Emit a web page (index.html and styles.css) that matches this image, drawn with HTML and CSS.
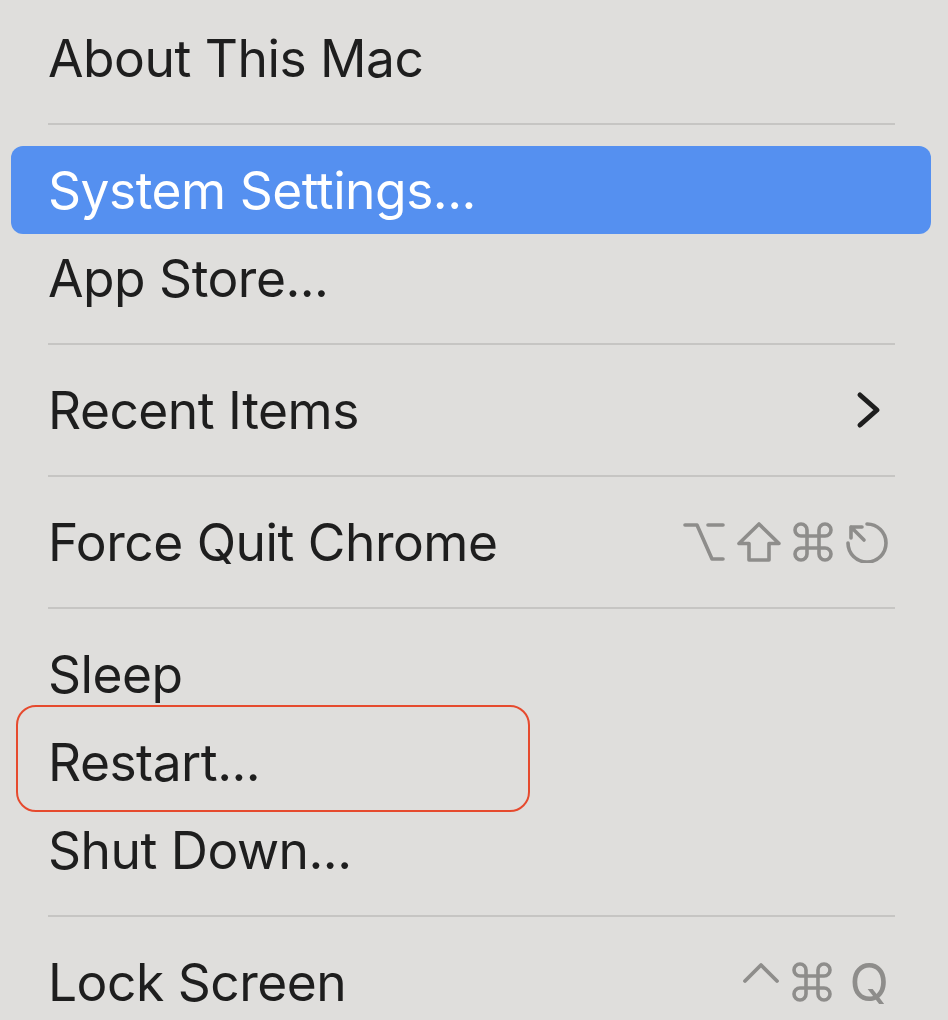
FILE: index.html
```html
<!DOCTYPE html>
<html lang="en">
<head>
<meta charset="utf-8">
<title>Apple menu</title>
<link rel="stylesheet" href="styles.css">
</head>
<body>
<div class="menu">
  <div class="item"><span class="label">About This Mac</span></div>
  <div class="sep"></div>
  <div class="item selected"><span class="label">System Settings...</span></div>
  <div class="item"><span class="label">App Store...</span></div>
  <div class="sep"></div>
  <div class="item"><span class="label">Recent Items</span>
    <svg class="chevron" width="26" height="38" viewBox="0 0 26 38"><path d="M4 4 L21 19 L4 34" fill="none" stroke="#1e1e1e" stroke-width="5" stroke-linecap="round" stroke-linejoin="round"/></svg>
  </div>
  <div class="sep"></div>
  <div class="item"><span class="label">Force Quit Chrome</span>
    <span class="keys">
      <svg width="42" height="40" viewBox="0 0 42 40"><path d="M2 3 H14 L29 37 H40 M25 3 H40" fill="none" stroke="currentColor" stroke-width="3.6" stroke-linecap="round" stroke-linejoin="round"/></svg>
      <svg width="44" height="40" viewBox="0 0 44 40"><path d="M22 2 L2 21.5 H12 V38 H32 V21.5 H42 Z" fill="none" stroke="currentColor" stroke-width="3.6" stroke-linejoin="round"/></svg>
      <svg width="40" height="40" viewBox="2 2 20 20"><path d="M15 6v12a3 3 0 1 0 3-3H6a3 3 0 1 0 3 3V6a3 3 0 1 0-3 3h12a3 3 0 1 0-3-3" fill="none" stroke="currentColor" stroke-width="1.8" stroke-linejoin="round"/></svg>
      <svg width="44" height="42" viewBox="0 0 44 42"><path d="M22 3 A19 19 0 1 1 3 22" fill="none" stroke="currentColor" stroke-width="3.6" stroke-linecap="round"/><path d="M19 19 L6 6 M6 17 V6 H17" fill="none" stroke="currentColor" stroke-width="3.6" stroke-linecap="round" stroke-linejoin="round"/></svg>
    </span>
  </div>
  <div class="sep"></div>
  <div class="item"><span class="label">Sleep</span></div>
  <div class="item annotated"><span class="label">Restart...</span><div class="callout"></div></div>
  <div class="item"><span class="label">Shut Down...</span></div>
  <div class="sep"></div>
  <div class="item"><span class="label">Lock Screen</span>
    <span class="keys">
      <svg width="38" height="40" viewBox="0 0 38 40"><path d="M3 19 L19 3 L35 19" fill="none" stroke="currentColor" stroke-width="3.8" stroke-linecap="round" stroke-linejoin="round"/></svg>
      <svg width="40" height="40" viewBox="2 2 20 20"><path d="M15 6v12a3 3 0 1 0 3-3H6a3 3 0 1 0 3 3V6a3 3 0 1 0-3 3h12a3 3 0 1 0-3-3" fill="none" stroke="currentColor" stroke-width="1.8" stroke-linejoin="round"/></svg>
      <span class="keyq">Q</span>
    </span>
  </div>
</div>
</body>
</html>
```

FILE: styles.css
```css
html, body {
  margin: 0;
  padding: 0;
  background: #dfdedc;
}

body {
  width: 948px;
  height: 1020px;
  overflow: hidden;
  font-family: "Inter", "Liberation Sans", sans-serif;
  color: #1e1e1e;
}

.menu {
  display: flex;
  flex-direction: column;
  padding: 14px 17px 0 11px;
}

.item {
  position: relative;
  height: 88px;
  display: flex;
  align-items: center;
  justify-content: space-between;
  padding: 0 42px 0 37px;
  border-radius: 12px;
}

.label {
  font-size: 51.5px;
  line-height: 88px;
  letter-spacing: -0.5px;
  white-space: nowrap;
}

.selected {
  background: #5590f0;
  color: #ffffff;
}

.sep {
  height: 2px;
  margin: 21px 36px 21px 37px;
  background: #c6c5c3;
}

.chevron {
  margin-right: 7px;
  display: block;
}

.keys {
  display: flex;
  align-items: center;
  gap: 12px;
  color: #8e8d8b;
}

.keys svg {
  display: block;
}

.keyq {
  font-size: 51.5px;
  line-height: 88px;
  color: #8e8d8b;
  margin-left: 6px;
}

.callout {
  position: absolute;
  left: 5px;
  top: -13px;
  width: 514px;
  height: 107px;
  box-sizing: border-box;
  border: 2.5px solid #e64a2e;
  border-radius: 20px;
}
```
